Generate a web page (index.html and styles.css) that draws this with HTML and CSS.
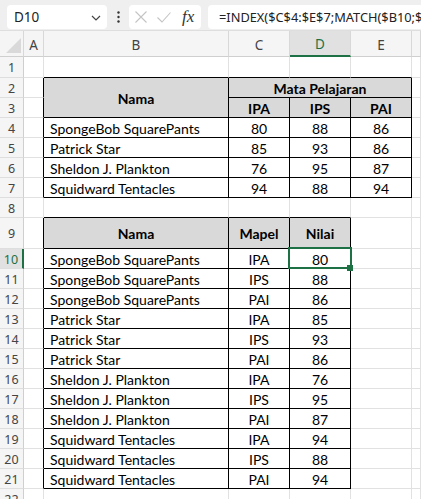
FILE: index.html
```html
<!DOCTYPE html>
<html>
<head>
<meta charset="utf-8">
<link rel="stylesheet" href="styles.css">
</head>
<body>
<div class="app">
  <div class="toolbar">
    <div class="namebox">
      <span class="nb-text">D10</span>
      <svg class="chev" width="10" height="6" viewBox="0 0 10 6"><path d="M1 1 L5 5 L9 1" fill="none" stroke="#444" stroke-width="1.2"/></svg>
    </div>
    <div class="dots">
      <svg width="3" height="12" viewBox="0 0 3 12"><circle cx="1.5" cy="1.5" r="1.2" fill="#333"/><circle cx="1.5" cy="6" r="1.2" fill="#333"/><circle cx="1.5" cy="10.5" r="1.2" fill="#333"/></svg>
    </div>
    <div class="fxbox">
      <svg class="ico-x" width="12" height="12" viewBox="0 0 12 12"><path d="M0.5 0.5 L11.5 11.5 M11.5 0.5 L0.5 11.5" stroke="#c4c4c4" stroke-width="1.1" fill="none"/></svg>
      <svg class="ico-ok" width="14" height="11" viewBox="0 0 14 11"><path d="M0.5 5.5 L5 10 L13.5 0.5" stroke="#c4c4c4" stroke-width="1.1" fill="none"/></svg>
      <span class="fx">fx</span>
    </div>
    <div class="formula">=INDEX($C$4:$E$7;MATCH($B10;$B$4:$B$7;0);MATCH($C10;$C$3:$E$3;0))</div>
  </div>

  <div class="sheet">
    <div class="ch corner"><span class="tri"></span></div>
    <div class="ch">A</div>
    <div class="ch">B</div>
    <div class="ch">C</div>
    <div class="ch chsel">D</div>
    <div class="ch">E</div>
    <div class="ch"></div>

    <div class="rh">1</div><div class="c"></div><div class="c tt"></div><div class="c tt"></div><div class="c tt"></div><div class="c tt"></div><div class="c"></div>

    <div class="rh">2</div><div class="c tl"></div>
    <div class="c t hd b23">Nama</div>
    <div class="c t hd c2">Mata Pelajaran</div>
    <div class="c"></div>

    <div class="rh">3</div><div class="c tl"></div>
    <div class="c t hd">IPA</div><div class="c t hd">IPS</div><div class="c t hd">PAI</div>
    <div class="c"></div>

    <div class="rh">4</div><div class="c tl"></div><div class="c t nm">SpongeBob SquarePants</div><div class="c t n">80</div><div class="c t n">88</div><div class="c t n">86</div><div class="c"></div>
    <div class="rh">5</div><div class="c tl"></div><div class="c t nm">Patrick Star</div><div class="c t n">85</div><div class="c t n">93</div><div class="c t n">86</div><div class="c"></div>
    <div class="rh">6</div><div class="c tl"></div><div class="c t nm">Sheldon J. Plankton</div><div class="c t n">76</div><div class="c t n">95</div><div class="c t n">87</div><div class="c"></div>
    <div class="rh">7</div><div class="c tl"></div><div class="c t nm">Squidward Tentacles</div><div class="c t n">94</div><div class="c t n">88</div><div class="c t n">94</div><div class="c"></div>

    <div class="rh">8</div><div class="c"></div><div class="c tt"></div><div class="c tt"></div><div class="c tt"></div><div class="c"></div><div class="c"></div>

    <div class="rh">9</div><div class="c tl"></div><div class="c t hd">Nama</div><div class="c t hd">Mapel</div><div class="c t hd">Nilai</div><div class="c"></div><div class="c"></div>

    <div class="rh rhsel">10</div><div class="c tl"></div><div class="c t nm">SpongeBob SquarePants</div><div class="c t n">IPA</div><div class="c t n sel">80<span class="handle"></span></div><div class="c"></div><div class="c"></div>
    <div class="rh">11</div><div class="c tl"></div><div class="c t nm">SpongeBob SquarePants</div><div class="c t n">IPS</div><div class="c t n">88</div><div class="c"></div><div class="c"></div>
    <div class="rh">12</div><div class="c tl"></div><div class="c t nm">SpongeBob SquarePants</div><div class="c t n">PAI</div><div class="c t n">86</div><div class="c"></div><div class="c"></div>
    <div class="rh">13</div><div class="c tl"></div><div class="c t nm">Patrick Star</div><div class="c t n">IPA</div><div class="c t n">85</div><div class="c"></div><div class="c"></div>
    <div class="rh">14</div><div class="c tl"></div><div class="c t nm">Patrick Star</div><div class="c t n">IPS</div><div class="c t n">93</div><div class="c"></div><div class="c"></div>
    <div class="rh">15</div><div class="c tl"></div><div class="c t nm">Patrick Star</div><div class="c t n">PAI</div><div class="c t n">86</div><div class="c"></div><div class="c"></div>
    <div class="rh">16</div><div class="c tl"></div><div class="c t nm">Sheldon J. Plankton</div><div class="c t n">IPA</div><div class="c t n">76</div><div class="c"></div><div class="c"></div>
    <div class="rh">17</div><div class="c tl"></div><div class="c t nm">Sheldon J. Plankton</div><div class="c t n">IPS</div><div class="c t n">95</div><div class="c"></div><div class="c"></div>
    <div class="rh">18</div><div class="c tl"></div><div class="c t nm">Sheldon J. Plankton</div><div class="c t n">PAI</div><div class="c t n">87</div><div class="c"></div><div class="c"></div>
    <div class="rh">19</div><div class="c tl"></div><div class="c t nm">Squidward Tentacles</div><div class="c t n">IPA</div><div class="c t n">94</div><div class="c"></div><div class="c"></div>
    <div class="rh">20</div><div class="c tl"></div><div class="c t nm">Squidward Tentacles</div><div class="c t n">IPS</div><div class="c t n">88</div><div class="c"></div><div class="c"></div>
    <div class="rh">21</div><div class="c tl"></div><div class="c t nm">Squidward Tentacles</div><div class="c t n">PAI</div><div class="c t n">94</div><div class="c"></div><div class="c"></div>

    <div class="rh">22</div><div class="c"></div><div class="c"></div><div class="c"></div><div class="c"></div><div class="c"></div><div class="c"></div>
  </div>
</div>
</body>
</html>
```
FILE: styles.css
```css
* { box-sizing: border-box; }
html, body { margin: 0; padding: 0; background: #fff; }
body { width: 421px; height: 499px; overflow: hidden; }
.app { width: 421px; height: 499px; overflow: hidden; }

.toolbar {
  height: 31px;
  background: #efefef;
  border-bottom: 1px solid #dedede;
  display: flex;
  align-items: flex-start;
  padding: 5px 0 0 7px;
  font-family: "Noto Sans", "DejaVu Sans", sans-serif;
}
.namebox {
  width: 100px; height: 24px;
  background: #fff;
  border-radius: 4px;
  display: flex; align-items: center;
  padding: 0 6px 0 7px;
  justify-content: space-between;
}
.nb-text { font-size: 13.5px; color: #222; }
.chev { margin-top: 1px; }
.dots { width: 22px; height: 24px; display: flex; align-items: center; justify-content: center; }
.fxbox {
  width: 72px; height: 24px;
  background: #fff; border-radius: 4px;
  display: flex; align-items: center;
  padding-left: 6px;
}
.ico-x { margin-right: 10px; }
.ico-ok { margin-right: 11px; }
.fx { font-family: "Liberation Serif", "DejaVu Serif", serif; font-style: italic; font-size: 17px; color: #333; line-height: 1; margin-top: -2px; }
.formula {
  margin-left: 7px;
  flex: 1;
  height: 24px;
  background: #fff; border-radius: 4px 0 0 4px;
  padding-left: 11px;
  font-size: 12.8px; color: #222;
  line-height: 24px;
  white-space: nowrap; overflow: hidden;
}

.sheet {
  display: grid;
  grid-template-columns: 24px 20px 185px 61px 61px 61px 1fr;
  grid-template-rows: 26px 21px repeat(6, 20px) 20px 31px repeat(12, 20px) 20px;
  font-family: "Lato", "Liberation Sans", sans-serif;
  font-size: 14px;
  color: #000;
}
.ch {
  background: #f5f5f5;
  border-right: 1px solid #d8d8d8;
  border-bottom: 1px solid #cfcfcf;
  font-family: "Noto Sans", "DejaVu Sans", sans-serif;
  font-size: 13.5px; color: #444;
  display: flex; align-items: center; justify-content: center;
  padding-top: 2px;
}
.corner { position: relative; }
.tri {
  position: absolute; right: 2px; bottom: 3px;
  width: 0; height: 0;
  border-left: 15px solid transparent;
  border-bottom: 15px solid #d9d9d9;
}
.chsel {
  background: #e1e1e1;
  color: #1e7145;
  border-bottom: 2px solid #1e7145;
}
.rh {
  background: #f5f5f5;
  border-right: 1px solid #cfcfcf;
  border-bottom: 1px solid #dedede;
  font-family: "Noto Sans", "DejaVu Sans", sans-serif;
  font-size: 12.5px; color: #444;
  display: flex; align-items: center; justify-content: center;
  padding-top: 1px;
}
.rhsel { background: #e1e1e1; color: #1e7145; border-right: 2px solid #1e7145; }

.c {
  border-right: 1px solid #e1e1e1;
  border-bottom: 1px solid #e1e1e1;
  display: flex; align-items: center;
  white-space: nowrap; overflow: visible;
  padding-top: 1px;
}
.tt { border-bottom-color: #000; }
.tl { border-right-color: #000; }
.t { border-right-color: #000; border-bottom-color: #000; }
.hd { background: #d9d9d9; font-weight: bold; justify-content: center; }
.b23 { grid-row: span 2; }
.c2 { grid-column: span 3; }
.n { justify-content: center; }
.nm { padding-left: 6px; }

.sel { position: relative; }
.sel::after {
  content: "";
  position: absolute;
  top: -2px; left: -2px; right: -2px; bottom: -1px;
  border: 2px solid #1e7145;
  pointer-events: none;
}
.handle {
  position: absolute;
  right: -3px; bottom: -3px;
  width: 6px; height: 6px;
  background: #1e7145;
  z-index: 2;
}
```
